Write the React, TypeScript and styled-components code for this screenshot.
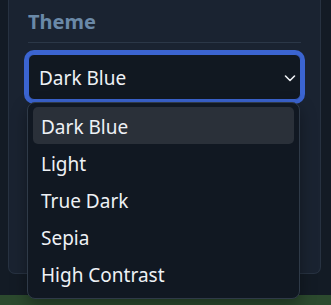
import React, { useState } from 'react';
import styled, { createGlobalStyle } from 'styled-components';

const themes = ['Dark Blue', 'Light', 'True Dark', 'Sepia', 'High Contrast'];

const GlobalStyle = createGlobalStyle`
  html, body {
    margin: 0;
    background: #131b25;
  }
  body {
    font-family: "Noto Sans", "Open Sans", sans-serif;
    color: #eef1f5;
  }
`;

const Page = styled.div`
  display: flex;
  flex-direction: column;
  height: 305px;
  overflow: hidden;
`;

const Panel = styled.section`
  margin: 0 10px 0 8px;
  padding: 8px 19px 20px;
  height: 253px;
  background: #1a2331;
  border: 1px solid #273241;
  border-top: none;
  border-radius: 0 0 7px 7px;
`;

const Heading = styled.h3`
  margin: 0;
  padding-bottom: 7px;
  font-size: 20px;
  font-weight: 700;
  color: #6a89a8;
  border-bottom: 1px solid #2b3747;
`;

const SelectWrap = styled.div`
  position: relative;
  margin-top: 11px;
`;

const SelectBox = styled.div`
  display: flex;
  align-items: center;
  justify-content: space-between;
  height: 46px;
  box-sizing: border-box;
  padding: 1px 4px 0 10px;
  background: #111821;
  border: 1px solid #3b64d0;
  border-radius: 6px;
  box-shadow: 0 0 0 4px #3b64d0;
  font-size: 19px;
`;

const Chevron = styled.svg`
  width: 12px;
  height: 12px;
  margin-top: 1px;
`;

const Menu = styled.ul`
  position: absolute;
  top: calc(100% + 2px);
  left: -1px;
  right: 1px;
  margin: 0;
  padding: 4px 5px 6px;
  list-style: none;
  background: #111822;
  border: 1px solid #2f3a48;
  border-radius: 8px;
  box-shadow: 0 6px 16px rgba(0, 0, 0, 0.35);
`;

const Option = styled.li<{ $active: boolean }>`
  height: 37px;
  display: flex;
  align-items: center;
  padding: 2px 8px 0;
  box-sizing: border-box;
  border-radius: 5px;
  font-size: 19px;
  background: ${(p) => (p.$active ? '#2a3039' : 'transparent')};
`;

const NextBar = styled.div`
  margin-top: 21px;
  height: 10px;
  background: #2c4a2e;
`;

export default function App() {
  const [value, setValue] = useState('Dark Blue');

  return (
    <Page>
      <GlobalStyle />
      <Panel>
        <Heading>Theme</Heading>
        <SelectWrap>
          <SelectBox>
            <span>{value}</span>
            <Chevron viewBox="0 0 12 12" fill="none">
              <path d="M1.5 4 6 8.5 10.5 4" stroke="#eef1f5" strokeWidth="1.6" strokeLinecap="round" strokeLinejoin="round" />
            </Chevron>
          </SelectBox>
          <Menu>
            {themes.map((t) => (
              <Option key={t} $active={t === value} onClick={() => setValue(t)}>
                {t}
              </Option>
            ))}
          </Menu>
        </SelectWrap>
      </Panel>
      <NextBar />
    </Page>
  );
}
